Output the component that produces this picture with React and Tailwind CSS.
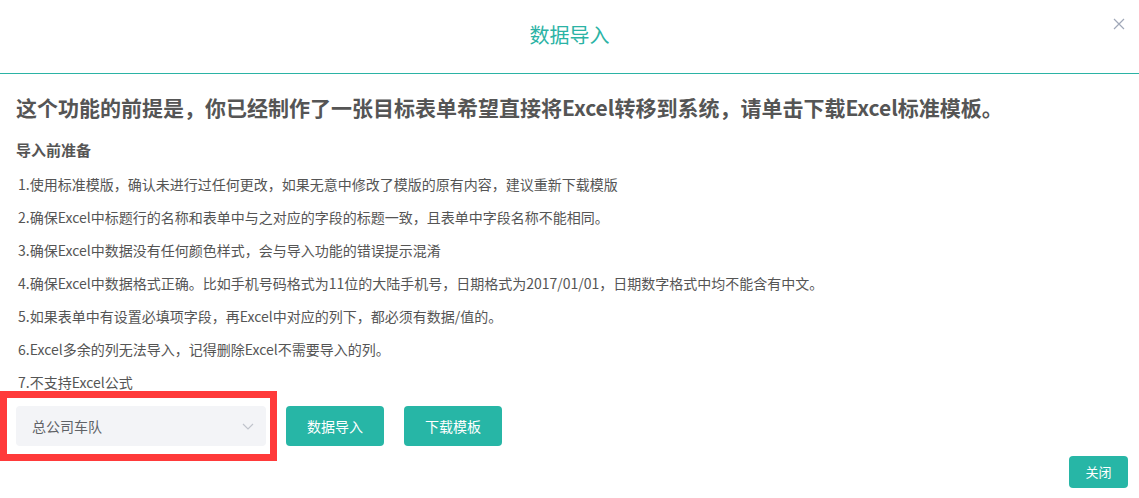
import React from "react";

// Preparation notes shown in the import dialog
const notes = [
  "1.使用标准模版，确认未进行过任何更改，如果无意中修改了模版的原有内容，建议重新下载模版",
  "2.确保Excel中标题行的名称和表单中与之对应的字段的标题一致，且表单中字段名称不能相同。",
  "3.确保Excel中数据没有任何颜色样式，会与导入功能的错误提示混淆",
  "4.确保Excel中数据格式正确。比如手机号码格式为11位的大陆手机号，日期格式为2017/01/01，日期数字格式中均不能含有中文。",
  "5.如果表单中有设置必填项字段，再Excel中对应的列下，都必须有数据/值的。",
  "6.Excel多余的列无法导入，记得删除Excel不需要导入的列。",
  "7.不支持Excel公式",
];

const App = () => {
  return (
    <div className="w-[1139px] h-[498px] bg-white relative font-['Noto_Sans_CJK_SC','Microsoft_YaHei',sans-serif] overflow-hidden">
      {/* Dialog header */}
      <div className="h-[74px] flex items-center justify-center border-b border-[#2bb3a5]">
        <span className="text-[20px] text-[#2bb3a5] -mt-[4px]">数据导入</span>
      </div>
      {/* Close icon */}
      <button className="absolute top-[18px] right-[14px] w-[12px] h-[12px] text-[#a0a8b8]">
        <svg viewBox="0 0 12 12" width="12" height="12" fill="none" stroke="currentColor" strokeWidth="1.2">
          <path d="M1 1 L11 11 M11 1 L1 11" />
        </svg>
      </button>

      {/* Dialog body */}
      <div className="px-4 pt-[19px]">
        <h2 className="text-[21px] leading-[28px] font-bold text-[#555]">
          这个功能的前提是，你已经制作了一张目标表单希望直接将Excel转移到系统，请单击下载Excel标准模板。
        </h2>
        <h3 className="mt-[17px] text-[15px] leading-[24px] font-bold text-[#555]">导入前准备</h3>
        <div className="mt-[6px] flex flex-col">
          {notes.map((note, index) => (
            <p key={index} className="text-[14px] leading-[33px] text-[#555] pl-[2px]">
              {note}
            </p>
          ))}
        </div>

        {/* Actions row */}
        <div className="mt-[7px] flex items-center gap-5">
          <div className="relative w-[250px]">
            <div className="h-[40px] rounded bg-[#f3f4f7] flex items-center justify-between pl-4 pr-3">
              <span className="text-[14px] text-[#606266]">总公司车队</span>
              <svg viewBox="0 0 12 12" width="12" height="12" fill="none" stroke="#c0c4cc" strokeWidth="1.2">
                <path d="M1 4 L6 9 L11 4" />
              </svg>
            </div>
            {/* Red annotation frame */}
            <div className="absolute -left-4 -right-[11px] -top-[15px] -bottom-[15px] border-[7px] border-[#ff3a3a] pointer-events-none" />
          </div>
          <button className="w-[98px] h-[40px] rounded bg-[#27b6a6] text-white text-[14px]">数据导入</button>
          <button className="w-[98px] h-[40px] rounded bg-[#27b6a6] text-white text-[14px]">下载模板</button>
        </div>

        {/* Footer */}
        <div className="mt-[10px] flex justify-end">
          <button className="w-[59px] h-[32px] rounded bg-[#27b6a6] text-white text-[13px] -mr-[5px]">关闭</button>
        </div>
      </div>
    </div>
  );
};

export default App;
